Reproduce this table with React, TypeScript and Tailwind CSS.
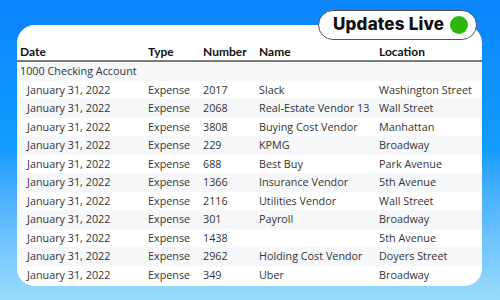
import React from 'react';

const rows = [
  ['2017', 'Slack', 'Washington Street'],
  ['2068', 'Real-Estate Vendor 13', 'Wall Street'],
  ['3808', 'Buying Cost Vendor', 'Manhattan'],
  ['229', 'KPMG', 'Broadway'],
  ['688', 'Best Buy', 'Park Avenue'],
  ['1366', 'Insurance Vendor', '5th Avenue'],
  ['2116', 'Utilities Vendor', 'Wall Street'],
  ['301', 'Payroll', 'Broadway'],
  ['1438', '', '5th Avenue'],
  ['2962', 'Holding Cost Vendor', 'Doyers Street'],
  ['349', 'Uber', 'Broadway'],
];

const cols = 'grid grid-cols-[128px_55px_56px_120px_1fr] pl-[3px]';

const App: React.FC = () => {
  return (
    <div className="relative w-[500px] h-[300px] overflow-hidden bg-gradient-to-b from-[#0a84fb] via-[#139cff] to-[#98dcfb] pt-[25px] pl-[17px]">
      <div className="w-[465px] h-[261px] bg-white rounded-[18px] overflow-hidden font-['Open_Sans',sans-serif] text-[10.8px] text-[#333]">
        {/* шапка таблицы */}
        <div className={`${cols} h-[37px] items-end pb-[1px] border-b-2 border-[#7a7a7a] font-['Lato',sans-serif] font-bold text-[12px] leading-[14px] text-[#111]`}>
          <span>Date</span>
          <span>Type</span>
          <span>Number</span>
          <span>Name</span>
          <span>Location</span>
        </div>
        <div className="h-[18.5px] flex items-center pl-[3px] bg-[#f6f7f9]">1000 Checking Account</div>
        {rows.map((r, i) => (
          <div key={i} className={`${cols} h-[18.5px] items-center ${i % 2 === 1 ? 'bg-[#f6f7f9]' : 'bg-white'}`}>
            <span className="pl-[7px]">January 31, 2022</span>
            <span>Expense</span>
            <span>{r[0]}</span>
            <span>{r[1]}</span>
            <span>{r[2]}</span>
          </div>
        ))}
      </div>

      {/* бейдж поверх карточки */}
      <div className="absolute left-[318px] top-[10px] w-[159px] h-[30px] rounded-full bg-white border border-[#555] flex items-center justify-between pl-[14px] pr-[8px]">
        <span className="font-['Inter',sans-serif] font-extrabold text-[17px] text-[#111] tracking-[0.2px]">Updates Live</span>
        <span className="w-[18px] h-[18px] rounded-full bg-[#2db70a]"></span>
      </div>
    </div>
  );
};

export default App;
